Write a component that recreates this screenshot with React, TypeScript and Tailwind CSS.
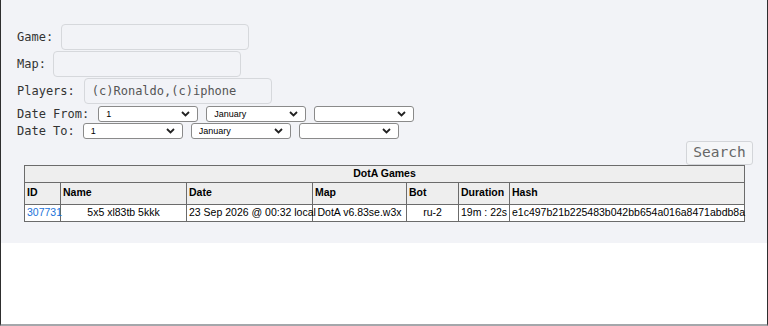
import React from "react";

const mono = "font-['DejaVu_Sans_Mono',monospace]";

const Chevron = () => (
  <svg
    className="pointer-events-none absolute right-[8px] top-1/2 -translate-y-1/2"
    width="9"
    height="6"
    viewBox="0 0 9 6"
  >
    <path d="M1 1l3.5 3.5L8 1" fill="none" stroke="#222" strokeWidth="1.8" />
  </svg>
);

const Select = ({ value }: { value: string }) => (
  <div className="relative h-[16px]">
    <select
      defaultValue={value}
      className="block h-[16px] w-[100px] appearance-none rounded-[3px] border border-[#8a8a8a] bg-white pl-[7px] text-[9px] leading-[14px] text-black font-['Liberation_Sans',sans-serif]"
    >
      <option value={value}>{value}</option>
    </select>
    <Chevron />
  </div>
);

const TextField = ({ value = "" }: { value?: string }) => (
  <input
    type="text"
    defaultValue={value}
    className={`h-[26px] w-[188px] rounded-[4px] border border-[#d6d8dc] bg-[#f2f3f7] px-[7px] text-[12px] text-[#555] ${mono}`}
  />
);

const th = "border border-[#6b6b6b] px-[2px] text-left font-bold";
const td = "border border-[#6b6b6b] px-[2px] whitespace-nowrap";

export default function App() {
  return (
    <div className="box-border h-[326px] w-full border-x border-x-[#2e2e2e] border-b-2 border-b-[#a4a7ab] bg-white">
      <div className="h-[243px] bg-[#f2f3f7] pl-[16px] pr-[14px] pt-[24px]">
        <div className={`flex flex-col text-[12px] text-[#333] ${mono}`}>
          <label className="flex items-center gap-[8px]">
            Game:
            <TextField />
          </label>
          <label className="mt-[1px] flex items-center gap-[7px]">
            Map:
            <TextField />
          </label>
          <label className="mt-[1px] flex items-center gap-[9px]">
            Players:
            <TextField value="(c)Ronaldo,(c)iphone" />
          </label>
          <div className="mt-[2px] flex h-[16px] items-center gap-[8px] leading-[16px]">
            <span className="mr-[1px]">Date From:</span>
            <Select value="1" />
            <Select value="January" />
            <Select value="" />
          </div>
          <div className="mt-[1px] flex h-[16px] items-center gap-[8px] leading-[16px]">
            <span>Date To:</span>
            <Select value="1" />
            <Select value="January" />
            <Select value="" />
          </div>
        </div>

        <div className="mt-[2px] flex justify-end">
          <button
            type="button"
            className={`h-[24px] w-[67px] rounded-[3px] border border-[#d3d5d9] bg-[#f5f6f8] text-[14.5px] text-[#666] ${mono}`}
          >
            Search
          </button>
        </div>

        <table className="ml-[7px] w-[721px] table-fixed border-collapse text-[10.5px] text-black font-['Liberation_Sans',Arial,sans-serif]">
          <colgroup>
            <col className="w-[36px]" />
            <col className="w-[126px]" />
            <col className="w-[126px]" />
            <col className="w-[94px]" />
            <col className="w-[52px]" />
            <col className="w-[51px]" />
            <col />
          </colgroup>
          <thead className="bg-[#eeeeee]">
            <tr className="h-[16px]">
              <th colSpan={7} className="border border-[#6b6b6b] text-center font-bold">
                DotA Games
              </th>
            </tr>
            <tr className="h-[22px]">
              <th className={th}>ID</th>
              <th className={th}>Name</th>
              <th className={th}>Date</th>
              <th className={th}>Map</th>
              <th className={th}>Bot</th>
              <th className={th}>Duration</th>
              <th className={th}>Hash</th>
            </tr>
          </thead>
          <tbody className="bg-white">
            <tr className="h-[16px]">
              <td className={td}>
                <a href="#" className="text-[#1a73d9]">
                  307731
                </a>
              </td>
              <td className={`${td} text-center`}>5x5 xl83tb 5kkk</td>
              <td className={`${td} px-0`}>23 Sep 2026 @ 00:32 local</td>
              <td className={`${td} text-center`}>DotA v6.83se.w3x</td>
              <td className={`${td} text-center`}>ru-2</td>
              <td className={td}>19m : 22s</td>
              <td className={td}>e1c497b21b225483b042bb654a016a8471abdb8a</td>
            </tr>
          </tbody>
        </table>
      </div>
    </div>
  );
}
